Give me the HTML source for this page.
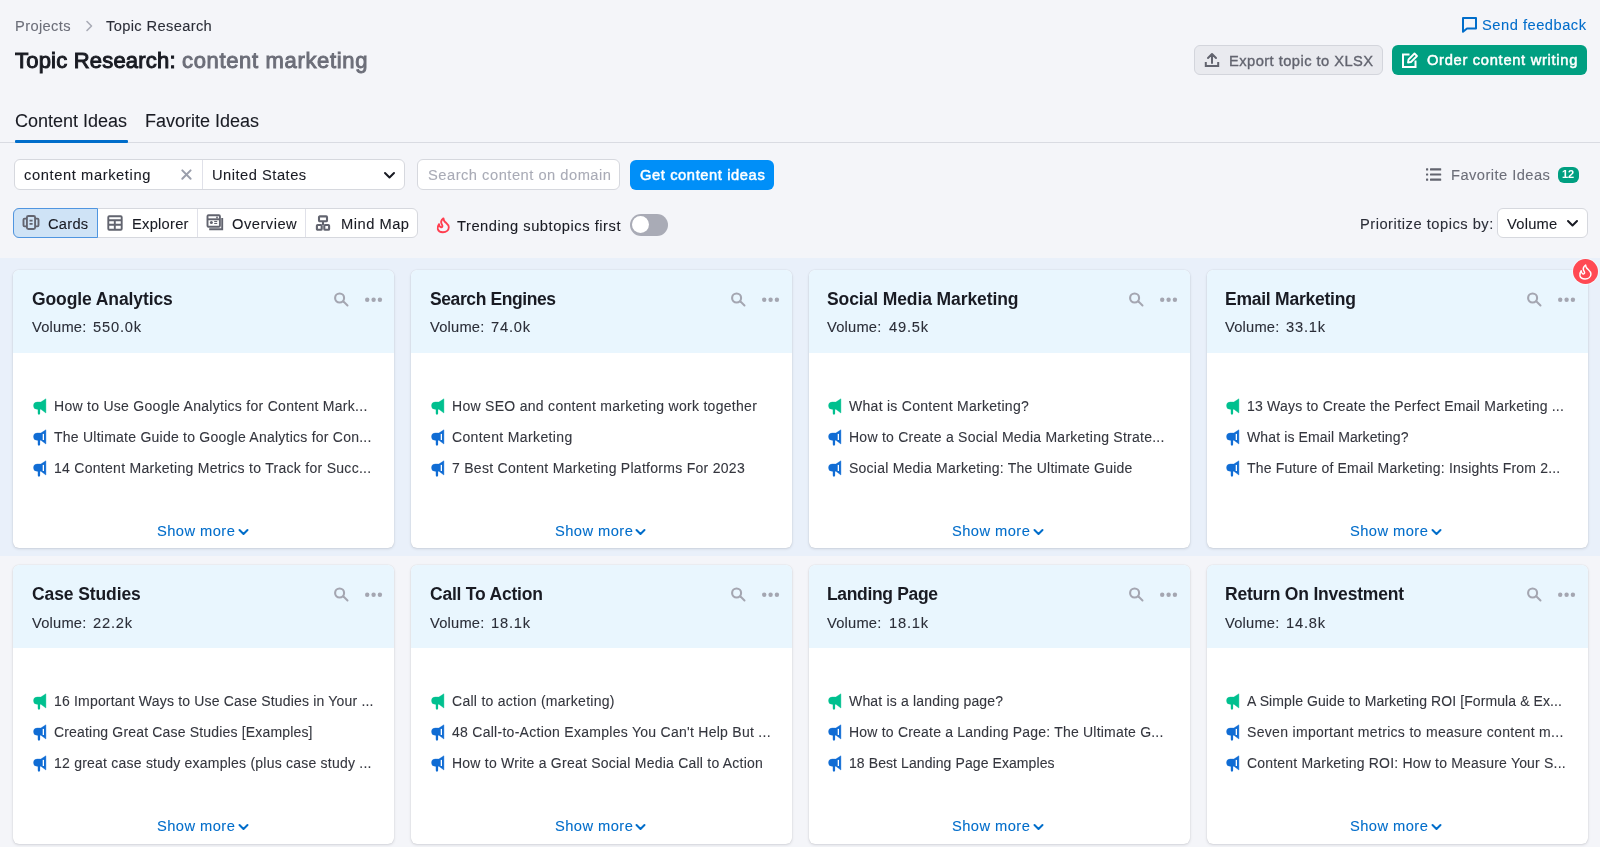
<!DOCTYPE html>
<html><head><meta charset="utf-8"><title>Topic Research</title>
<style>
html,body{margin:0;padding:0;}
body{width:1600px;height:847px;overflow:hidden;position:relative;background:#f4f5f9;font-family:"Liberation Sans",sans-serif;}
.t{position:absolute;white-space:nowrap;line-height:30px;will-change:transform;-webkit-text-stroke:0.1px currentColor;}
.r{position:absolute;}
svg.r{overflow:visible}
</style></head><body>
<div class="t" style="left:15px;top:10.600000000000001px;font-size:14.7px;color:#6c6e79;font-weight:400;letter-spacing:0.35px;">Projects</div>
<svg class="r" style="left:84px;top:19px" width="10" height="14" viewBox="0 0 10 14"><path d="M3 2.5 L7.5 7 L3 11.5" fill="none" stroke="#a9abb6" stroke-width="1.6" stroke-linecap="round" stroke-linejoin="round"/></svg>
<div class="t" style="left:105.6px;top:10.600000000000001px;font-size:14.7px;color:#2b2e38;font-weight:400;letter-spacing:0.35px;">Topic Research</div>
<div class="t" style="left:15px;top:45.5px;font-size:22px;color:#191b23;font-weight:400;letter-spacing:0.2px;-webkit-text-stroke:1px #191b23;">Topic Research:</div>
<div class="t" style="left:181.5px;top:45.5px;font-size:22px;color:#6c6e79;font-weight:400;letter-spacing:0.66px;-webkit-text-stroke:0.95px #6c6e79;">content marketing</div>
<svg class="r" style="left:1461px;top:16px" width="17" height="17" viewBox="0 0 17 17"><path d="M2 2 H15 V12.5 H6 L2 15.8 Z" fill="none" stroke="#006dca" stroke-width="2" stroke-linejoin="round"/></svg>
<div class="t" style="left:1482px;top:10.399999999999999px;font-size:14.7px;color:#006dca;font-weight:400;letter-spacing:0.5px;">Send feedback</div>
<div class="r" style="left:1194px;top:45px;width:189px;height:30px;box-sizing:border-box;border:1px solid #d3d5dc;background:#e9eaef;border-radius:6px"></div>
<svg class="r" style="left:1204px;top:52px" width="16" height="16" viewBox="0 0 16 16"><path d="M8 11 V2.5 M4 6 L8 2 L12 6" fill="none" stroke="#62646f" stroke-width="2" stroke-linecap="round" stroke-linejoin="round"/><path d="M1.8 10 V14 H14.2 V10" fill="none" stroke="#62646f" stroke-width="2"/></svg>
<div class="t" style="left:1229.4px;top:45.599999999999994px;font-size:14.7px;color:#62646f;font-weight:400;letter-spacing:0.45px;-webkit-text-stroke:0.35px #62646f;">Export topic to XLSX</div>
<div class="r" style="left:1392px;top:45px;width:195px;height:29.5px;background:#009f81;border-radius:6px"></div>
<svg class="r" style="left:1400px;top:51px" width="19" height="19" viewBox="0 0 19 19"><path d="M9.5 3.5 H3 V16 H15.5 V9.5" fill="none" stroke="#fff" stroke-width="2"/><path d="M8 11.5 L8.5 8.5 L14.5 2.5 L17 5 L11 11 Z" fill="none" stroke="#fff" stroke-width="1.8" stroke-linejoin="round"/></svg>
<div class="t" style="left:1426.9px;top:45.099999999999994px;font-size:14.7px;color:#ffffff;font-weight:400;letter-spacing:0.7px;-webkit-text-stroke:0.5px #fff;">Order content writing</div>
<div class="t" style="left:15px;top:106.2px;font-size:18px;color:#191b23;font-weight:400;letter-spacing:0px;">Content Ideas</div>
<div class="t" style="left:145.3px;top:106.2px;font-size:18px;color:#191b23;font-weight:400;letter-spacing:0px;">Favorite Ideas</div>
<div class="r" style="left:0px;top:142px;width:1600px;height:1px;background:#d9dbe2"></div>
<div class="r" style="left:14.6px;top:140px;width:113.4px;height:3px;background:#006dca;border-radius:1px"></div>
<div class="r" style="left:14px;top:159px;width:391px;height:31px;box-sizing:border-box;border:1px solid #d6d8de;background:#fff;border-radius:6px"></div>
<div class="r" style="left:202px;top:160px;width:1px;height:29px;background:#e0e1e9"></div>
<div class="t" style="left:24.4px;top:160px;font-size:14.7px;color:#191b23;font-weight:400;letter-spacing:0.6px;">content marketing</div>
<svg class="r" style="left:180px;top:169px" width="13" height="12" viewBox="0 0 13 12"><path d="M2.3 1.4 L10.6 9.8 M10.6 1.4 L2.3 9.8" stroke="#9a9eab" stroke-width="2" stroke-linecap="round"/></svg>
<div class="t" style="left:212.2px;top:160px;font-size:14.7px;color:#191b23;font-weight:400;letter-spacing:0.5px;">United States</div>
<svg class="r" style="left:383px;top:171px" width="13" height="9" viewBox="0 0 13 9"><path d="M2 2 L6.5 6.5 L11 2" fill="none" stroke="#191b23" stroke-width="2" stroke-linecap="round" stroke-linejoin="round"/></svg>
<div class="r" style="left:417px;top:159px;width:203px;height:31px;box-sizing:border-box;border:1px solid #d6d8de;background:#fff;border-radius:6px"></div>
<div class="t" style="left:427.8px;top:160px;font-size:14.7px;color:#a9abb6;font-weight:400;letter-spacing:0.5px;">Search content on domain</div>
<div class="r" style="left:630px;top:160px;width:144px;height:29.5px;background:#008ff8;border-radius:6px"></div>
<div class="t" style="left:640.4px;top:160px;font-size:14.7px;color:#ffffff;font-weight:400;letter-spacing:0.6px;-webkit-text-stroke:0.5px #fff;">Get content ideas</div>
<svg class="r" style="left:1425px;top:167px" width="17" height="15" viewBox="0 0 17 15"><g fill="#62646f"><rect x="1" y="1.2" width="2.2" height="2.2" rx="0.5"/><rect x="1" y="6.4" width="2.2" height="2.2" rx="0.5"/><rect x="1" y="11.6" width="2.2" height="2.2" rx="0.5"/><rect x="5" y="1.2" width="11.2" height="2.2" rx="0.5"/><rect x="5" y="6.4" width="11.2" height="2.2" rx="0.5"/><rect x="5" y="11.6" width="11.2" height="2.2" rx="0.5"/></g></svg>
<div class="t" style="left:1450.6px;top:160px;font-size:14.7px;color:#6c6e79;font-weight:400;letter-spacing:0.45px;">Favorite Ideas</div>
<div class="r" style="left:1557.5px;top:167px;width:21px;height:15.5px;background:#009f81;border-radius:6px"></div>
<div class="t" style="left:1561.5px;top:159px;font-size:11px;color:#fff;font-weight:700;letter-spacing:0px;-webkit-text-stroke:0;">12</div>
<div class="r" style="left:13px;top:208px;width:405px;height:30px;box-sizing:border-box;border:1px solid #d6d8de;background:#fff;border-radius:6px"></div>
<div class="r" style="left:13px;top:208px;width:85px;height:30px;box-sizing:border-box;border:1px solid #4f95e0;background:#cfe3f6;border-radius:6px 0 0 6px"></div>
<div class="r" style="left:197px;top:209px;width:1px;height:28px;background:#e0e1e9"></div>
<div class="r" style="left:305px;top:209px;width:1px;height:28px;background:#e0e1e9"></div>
<svg class="r" style="left:21px;top:214px" width="19" height="17" viewBox="0 0 19 17"><g fill="none" stroke="#62646f" stroke-width="1.9"><rect x="5.9" y="2" width="8.2" height="13" rx="1.5"/><path d="M5.9 4.6 H3.6 Q2.5 4.6 2.5 5.7 V11.3 Q2.5 12.4 3.6 12.4 H5.9 M14.1 4.6 H16.4 Q17.5 4.6 17.5 5.7 V11.3 Q17.5 12.4 16.4 12.4 H14.1"/></g><path d="M8.5 6.6 H11.6 M8.5 9.9 H11.6" stroke="#62646f" stroke-width="1.9"/></svg>
<div class="t" style="left:48.4px;top:208.8px;font-size:14.7px;color:#191b23;font-weight:400;letter-spacing:0.25px;">Cards</div>
<svg class="r" style="left:106px;top:214px" width="17" height="17" viewBox="0 0 17 17"><g fill="none" stroke="#62646f" stroke-width="1.9"><rect x="2.3" y="2.3" width="13.4" height="13.4" rx="1"/><path d="M2.3 6.2 H15.7 M2.3 10.8 H15.7 M8.8 6.2 V15.7"/></g></svg>
<div class="t" style="left:132.3px;top:208.8px;font-size:14.7px;color:#191b23;font-weight:400;letter-spacing:0.25px;">Explorer</div>
<svg class="r" style="left:205px;top:213px" width="19" height="18" viewBox="0 0 19 18"><g fill="none" stroke="#62646f" stroke-width="1.9"><rect x="2.5" y="2.3" width="12.4" height="11.4" rx="1"/><path d="M17.2 5 V16.3 H4.2"/><path d="M2.5 6.3 H14.9"/></g><g fill="#62646f"><rect x="11.2" y="3.6" width="1.6" height="1.8"/><circle cx="6.4" cy="9.4" r="1.5"/><rect x="9.2" y="7.9" width="3" height="1.1"/><rect x="9.2" y="9.9" width="3" height="1.1"/></g></svg>
<div class="t" style="left:232.1px;top:208.8px;font-size:14.7px;color:#191b23;font-weight:400;letter-spacing:0.5px;">Overview</div>
<svg class="r" style="left:314px;top:214px" width="18" height="17" viewBox="0 0 18 17"><g fill="none" stroke="#62646f" stroke-width="2.1"><rect x="5" y="2.4" width="8" height="4.8" rx="0.8"/><rect x="2.9" y="11" width="4.8" height="4.8" rx="0.8"/><rect x="10.3" y="11" width="4.8" height="4.8" rx="0.8"/><path d="M9 7.2 V11"/></g></svg>
<div class="t" style="left:340.5px;top:208.8px;font-size:14.7px;color:#191b23;font-weight:400;letter-spacing:0.5px;">Mind Map</div>
<svg class="r" style="left:430px;top:212px" width="26" height="26" viewBox="0 0 26 26"><g transform="translate(13.3 13.3) scale(0.87) translate(-13.3 -13.3)"><path d="M13.5 5.3 C10.6 7.6 10.2 10.3 11.8 12.6 C12.9 14.2 12.2 15.9 10.4 15.5 C9.3 15.2 8.6 13.9 8.4 11.9 C7.1 13.7 6.6 15.8 7 17.6 C7.6 20 9.8 21.3 12.9 21.3 C16.8 21.3 19.6 18.8 19.6 15.6 C19.6 12.2 16.3 10.7 14.7 8.7 C14 7.8 13.6 6.6 13.5 5.3 Z" fill="none" stroke="#ff3d4f" stroke-width="2.15" stroke-linejoin="round"/></g></svg>
<div class="t" style="left:456.7px;top:210.8px;font-size:14.7px;color:#191b23;font-weight:400;letter-spacing:0.53px;">Trending subtopics first</div>
<div class="r" style="left:630px;top:214px;width:37.5px;height:21.5px;background:#a9abb6;border-radius:11px"></div>
<div class="r" style="left:632px;top:216.2px;width:17px;height:17px;background:#fff;border-radius:50%"></div>
<div class="t" style="left:1359.6px;top:208.5px;font-size:14.7px;color:#2b2e38;font-weight:400;letter-spacing:0.5px;">Prioritize topics by:</div>
<div class="r" style="left:1497px;top:208px;width:91px;height:30px;box-sizing:border-box;border:1px solid #d6d8de;background:#fff;border-radius:6px"></div>
<div class="t" style="left:1506.9px;top:208.5px;font-size:14.7px;color:#191b23;font-weight:400;letter-spacing:0.25px;">Volume</div>
<svg class="r" style="left:1566px;top:219px" width="13" height="9" viewBox="0 0 13 9"><path d="M2 2 L6.5 6.5 L11 2" fill="none" stroke="#191b23" stroke-width="2" stroke-linecap="round" stroke-linejoin="round"/></svg>
<div class="r" style="left:0px;top:258px;width:1600px;height:298px;background:#e9f0fa"></div>
<div class="r" style="left:12.5px;top:270px;width:381.8px;height:278px;background:#fff;border-radius:6px;box-shadow:0 0 1px rgba(25,27,35,0.2),0 1px 3px rgba(25,27,35,0.13);overflow:hidden"></div>
<div class="r" style="left:12.5px;top:270px;width:381.8px;height:83px;background:#e9f6fe;border-radius:6px 6px 0 0"></div>
<div class="t" style="left:31.9px;top:284px;font-size:17.5px;color:#191b23;font-weight:700;letter-spacing:-0.1px;-webkit-text-stroke:0;">Google Analytics</div>
<div class="t" style="left:32.0px;top:312px;font-size:14.7px;color:#2b2e38;font-weight:400;letter-spacing:0.2px;">Volume:</div>
<div class="t" style="left:93.3px;top:312px;font-size:14.7px;color:#2b2e38;font-weight:400;letter-spacing:0.8px;">550.0k</div>
<svg class="r" style="left:330.5px;top:289px" width="20" height="20" viewBox="0 0 20 20"><circle cx="8.6" cy="9" r="4.5" fill="none" stroke="#a4a6b1" stroke-width="2.1"/><path d="M12.5 12.5 L16.5 16.5" stroke="#a4a6b1" stroke-width="2" stroke-linecap="round"/></svg>
<svg class="r" style="left:360.5px;top:294px" width="24" height="12" viewBox="0 0 24 12"><g fill="#a4a6b1"><circle cx="6.2" cy="5.7" r="2.2"/><circle cx="12.6" cy="5.7" r="2.2"/><circle cx="18.9" cy="5.7" r="2.2"/></g></svg>
<svg class="r" style="left:30.0px;top:396px" width="20" height="22" viewBox="0 0 20 22"><g fill="#00c08f"><path d="M7.1 6.1 H10.9 L15.9 2.8 V17 L10.9 13.2 H7.1 A3.55 3.55 0 0 1 7.1 6.1 Z" stroke="#00c08f" stroke-width="0.4" stroke-linejoin="round"/><rect x="7.8" y="12" width="2.3" height="6.7" rx="1.15"/></g></svg>
<div class="t" style="left:53.9px;top:391.2px;font-size:14px;color:#34363e;font-weight:400;letter-spacing:0.282px;">How to Use Google Analytics for Content Mark...</div>
<svg class="r" style="left:30.0px;top:427px" width="20" height="22" viewBox="0 0 20 22"><g fill="#106cd4"><path d="M7.1 6.1 H10.9 L15.9 2.8 V17 L10.9 13.2 H7.1 A3.55 3.55 0 0 1 7.1 6.1 Z" stroke="#106cd4" stroke-width="0.4" stroke-linejoin="round"/><rect x="7.8" y="12" width="2.3" height="6.7" rx="1.15"/></g><rect x="12.7" y="6.9" width="1.3" height="6.1" fill="#fff"/></svg>
<div class="t" style="left:53.9px;top:422px;font-size:14px;color:#34363e;font-weight:400;letter-spacing:0.241px;">The Ultimate Guide to Google Analytics for Con...</div>
<svg class="r" style="left:30.0px;top:457.5px" width="20" height="22" viewBox="0 0 20 22"><g fill="#106cd4"><path d="M7.1 6.1 H10.9 L15.9 2.8 V17 L10.9 13.2 H7.1 A3.55 3.55 0 0 1 7.1 6.1 Z" stroke="#106cd4" stroke-width="0.4" stroke-linejoin="round"/><rect x="7.8" y="12" width="2.3" height="6.7" rx="1.15"/></g><rect x="12.7" y="6.9" width="1.3" height="6.1" fill="#fff"/></svg>
<div class="t" style="left:53.9px;top:452.5px;font-size:14px;color:#34363e;font-weight:400;letter-spacing:0.286px;">14 Content Marketing Metrics to Track for Succ...</div>
<div class="t" style="left:156.9px;top:516px;font-size:14.7px;color:#006dca;font-weight:400;letter-spacing:0.45px;">Show more</div>
<svg class="r" style="left:236.5px;top:527.3px" width="14" height="10" viewBox="0 0 14 10"><path d="M2.5 3 L6.5 7 L10.5 3" fill="none" stroke="#006dca" stroke-width="2" stroke-linecap="round" stroke-linejoin="round"/></svg>
<div class="r" style="left:410.5px;top:270px;width:381.8px;height:278px;background:#fff;border-radius:6px;box-shadow:0 0 1px rgba(25,27,35,0.2),0 1px 3px rgba(25,27,35,0.13);overflow:hidden"></div>
<div class="r" style="left:410.5px;top:270px;width:381.8px;height:83px;background:#e9f6fe;border-radius:6px 6px 0 0"></div>
<div class="t" style="left:429.59999999999997px;top:284px;font-size:17.5px;color:#191b23;font-weight:700;letter-spacing:-0.4px;-webkit-text-stroke:0;">Search Engines</div>
<div class="t" style="left:429.7px;top:312px;font-size:14.7px;color:#2b2e38;font-weight:400;letter-spacing:0.2px;">Volume:</div>
<div class="t" style="left:491.0px;top:312px;font-size:14.7px;color:#2b2e38;font-weight:400;letter-spacing:0.8px;">74.0k</div>
<svg class="r" style="left:728.2px;top:289px" width="20" height="20" viewBox="0 0 20 20"><circle cx="8.6" cy="9" r="4.5" fill="none" stroke="#a4a6b1" stroke-width="2.1"/><path d="M12.5 12.5 L16.5 16.5" stroke="#a4a6b1" stroke-width="2" stroke-linecap="round"/></svg>
<svg class="r" style="left:758.2px;top:294px" width="24" height="12" viewBox="0 0 24 12"><g fill="#a4a6b1"><circle cx="6.2" cy="5.7" r="2.2"/><circle cx="12.6" cy="5.7" r="2.2"/><circle cx="18.9" cy="5.7" r="2.2"/></g></svg>
<svg class="r" style="left:427.7px;top:396px" width="20" height="22" viewBox="0 0 20 22"><g fill="#00c08f"><path d="M7.1 6.1 H10.9 L15.9 2.8 V17 L10.9 13.2 H7.1 A3.55 3.55 0 0 1 7.1 6.1 Z" stroke="#00c08f" stroke-width="0.4" stroke-linejoin="round"/><rect x="7.8" y="12" width="2.3" height="6.7" rx="1.15"/></g></svg>
<div class="t" style="left:451.59999999999997px;top:391.2px;font-size:14px;color:#34363e;font-weight:400;letter-spacing:0.292px;">How SEO and content marketing work together</div>
<svg class="r" style="left:427.7px;top:427px" width="20" height="22" viewBox="0 0 20 22"><g fill="#106cd4"><path d="M7.1 6.1 H10.9 L15.9 2.8 V17 L10.9 13.2 H7.1 A3.55 3.55 0 0 1 7.1 6.1 Z" stroke="#106cd4" stroke-width="0.4" stroke-linejoin="round"/><rect x="7.8" y="12" width="2.3" height="6.7" rx="1.15"/></g><rect x="12.7" y="6.9" width="1.3" height="6.1" fill="#fff"/></svg>
<div class="t" style="left:451.59999999999997px;top:422px;font-size:14px;color:#34363e;font-weight:400;letter-spacing:0.363px;">Content Marketing</div>
<svg class="r" style="left:427.7px;top:457.5px" width="20" height="22" viewBox="0 0 20 22"><g fill="#106cd4"><path d="M7.1 6.1 H10.9 L15.9 2.8 V17 L10.9 13.2 H7.1 A3.55 3.55 0 0 1 7.1 6.1 Z" stroke="#106cd4" stroke-width="0.4" stroke-linejoin="round"/><rect x="7.8" y="12" width="2.3" height="6.7" rx="1.15"/></g><rect x="12.7" y="6.9" width="1.3" height="6.1" fill="#fff"/></svg>
<div class="t" style="left:451.59999999999997px;top:452.5px;font-size:14px;color:#34363e;font-weight:400;letter-spacing:0.28px;">7 Best Content Marketing Platforms For 2023</div>
<div class="t" style="left:554.6px;top:516px;font-size:14.7px;color:#006dca;font-weight:400;letter-spacing:0.45px;">Show more</div>
<svg class="r" style="left:634.2px;top:527.3px" width="14" height="10" viewBox="0 0 14 10"><path d="M2.5 3 L6.5 7 L10.5 3" fill="none" stroke="#006dca" stroke-width="2" stroke-linecap="round" stroke-linejoin="round"/></svg>
<div class="r" style="left:808.5px;top:270px;width:381.8px;height:278px;background:#fff;border-radius:6px;box-shadow:0 0 1px rgba(25,27,35,0.2),0 1px 3px rgba(25,27,35,0.13);overflow:hidden"></div>
<div class="r" style="left:808.5px;top:270px;width:381.8px;height:83px;background:#e9f6fe;border-radius:6px 6px 0 0"></div>
<div class="t" style="left:827.3px;top:284px;font-size:17.5px;color:#191b23;font-weight:700;letter-spacing:-0.1px;-webkit-text-stroke:0;">Social Media Marketing</div>
<div class="t" style="left:827.4px;top:312px;font-size:14.7px;color:#2b2e38;font-weight:400;letter-spacing:0.2px;">Volume:</div>
<div class="t" style="left:888.6999999999999px;top:312px;font-size:14.7px;color:#2b2e38;font-weight:400;letter-spacing:0.8px;">49.5k</div>
<svg class="r" style="left:1125.9px;top:289px" width="20" height="20" viewBox="0 0 20 20"><circle cx="8.6" cy="9" r="4.5" fill="none" stroke="#a4a6b1" stroke-width="2.1"/><path d="M12.5 12.5 L16.5 16.5" stroke="#a4a6b1" stroke-width="2" stroke-linecap="round"/></svg>
<svg class="r" style="left:1155.9px;top:294px" width="24" height="12" viewBox="0 0 24 12"><g fill="#a4a6b1"><circle cx="6.2" cy="5.7" r="2.2"/><circle cx="12.6" cy="5.7" r="2.2"/><circle cx="18.9" cy="5.7" r="2.2"/></g></svg>
<svg class="r" style="left:825.4px;top:396px" width="20" height="22" viewBox="0 0 20 22"><g fill="#00c08f"><path d="M7.1 6.1 H10.9 L15.9 2.8 V17 L10.9 13.2 H7.1 A3.55 3.55 0 0 1 7.1 6.1 Z" stroke="#00c08f" stroke-width="0.4" stroke-linejoin="round"/><rect x="7.8" y="12" width="2.3" height="6.7" rx="1.15"/></g></svg>
<div class="t" style="left:849.3px;top:391.2px;font-size:14px;color:#34363e;font-weight:400;letter-spacing:0.282px;">What is Content Marketing?</div>
<svg class="r" style="left:825.4px;top:427px" width="20" height="22" viewBox="0 0 20 22"><g fill="#106cd4"><path d="M7.1 6.1 H10.9 L15.9 2.8 V17 L10.9 13.2 H7.1 A3.55 3.55 0 0 1 7.1 6.1 Z" stroke="#106cd4" stroke-width="0.4" stroke-linejoin="round"/><rect x="7.8" y="12" width="2.3" height="6.7" rx="1.15"/></g><rect x="12.7" y="6.9" width="1.3" height="6.1" fill="#fff"/></svg>
<div class="t" style="left:849.3px;top:422px;font-size:14px;color:#34363e;font-weight:400;letter-spacing:0.254px;">How to Create a Social Media Marketing Strate...</div>
<svg class="r" style="left:825.4px;top:457.5px" width="20" height="22" viewBox="0 0 20 22"><g fill="#106cd4"><path d="M7.1 6.1 H10.9 L15.9 2.8 V17 L10.9 13.2 H7.1 A3.55 3.55 0 0 1 7.1 6.1 Z" stroke="#106cd4" stroke-width="0.4" stroke-linejoin="round"/><rect x="7.8" y="12" width="2.3" height="6.7" rx="1.15"/></g><rect x="12.7" y="6.9" width="1.3" height="6.1" fill="#fff"/></svg>
<div class="t" style="left:849.3px;top:452.5px;font-size:14px;color:#34363e;font-weight:400;letter-spacing:0.237px;">Social Media Marketing: The Ultimate Guide</div>
<div class="t" style="left:952.3px;top:516px;font-size:14.7px;color:#006dca;font-weight:400;letter-spacing:0.45px;">Show more</div>
<svg class="r" style="left:1031.9px;top:527.3px" width="14" height="10" viewBox="0 0 14 10"><path d="M2.5 3 L6.5 7 L10.5 3" fill="none" stroke="#006dca" stroke-width="2" stroke-linecap="round" stroke-linejoin="round"/></svg>
<div class="r" style="left:1206.5px;top:270px;width:381.8px;height:278px;background:#fff;border-radius:6px;box-shadow:0 0 1px rgba(25,27,35,0.2),0 1px 3px rgba(25,27,35,0.13);overflow:hidden"></div>
<div class="r" style="left:1206.5px;top:270px;width:381.8px;height:83px;background:#e9f6fe;border-radius:6px 6px 0 0"></div>
<div class="t" style="left:1225.0px;top:284px;font-size:17.5px;color:#191b23;font-weight:700;letter-spacing:-0.24px;-webkit-text-stroke:0;">Email Marketing</div>
<div class="t" style="left:1225.1px;top:312px;font-size:14.7px;color:#2b2e38;font-weight:400;letter-spacing:0.2px;">Volume:</div>
<div class="t" style="left:1286.3999999999999px;top:312px;font-size:14.7px;color:#2b2e38;font-weight:400;letter-spacing:0.8px;">33.1k</div>
<svg class="r" style="left:1523.6px;top:289px" width="20" height="20" viewBox="0 0 20 20"><circle cx="8.6" cy="9" r="4.5" fill="none" stroke="#a4a6b1" stroke-width="2.1"/><path d="M12.5 12.5 L16.5 16.5" stroke="#a4a6b1" stroke-width="2" stroke-linecap="round"/></svg>
<svg class="r" style="left:1553.6px;top:294px" width="24" height="12" viewBox="0 0 24 12"><g fill="#a4a6b1"><circle cx="6.2" cy="5.7" r="2.2"/><circle cx="12.6" cy="5.7" r="2.2"/><circle cx="18.9" cy="5.7" r="2.2"/></g></svg>
<svg class="r" style="left:1223.1px;top:396px" width="20" height="22" viewBox="0 0 20 22"><g fill="#00c08f"><path d="M7.1 6.1 H10.9 L15.9 2.8 V17 L10.9 13.2 H7.1 A3.55 3.55 0 0 1 7.1 6.1 Z" stroke="#00c08f" stroke-width="0.4" stroke-linejoin="round"/><rect x="7.8" y="12" width="2.3" height="6.7" rx="1.15"/></g></svg>
<div class="t" style="left:1247.0px;top:391.2px;font-size:14px;color:#34363e;font-weight:400;letter-spacing:0.208px;">13 Ways to Create the Perfect Email Marketing ...</div>
<svg class="r" style="left:1223.1px;top:427px" width="20" height="22" viewBox="0 0 20 22"><g fill="#106cd4"><path d="M7.1 6.1 H10.9 L15.9 2.8 V17 L10.9 13.2 H7.1 A3.55 3.55 0 0 1 7.1 6.1 Z" stroke="#106cd4" stroke-width="0.4" stroke-linejoin="round"/><rect x="7.8" y="12" width="2.3" height="6.7" rx="1.15"/></g><rect x="12.7" y="6.9" width="1.3" height="6.1" fill="#fff"/></svg>
<div class="t" style="left:1247.0px;top:422px;font-size:14px;color:#34363e;font-weight:400;letter-spacing:0.119px;">What is Email Marketing?</div>
<svg class="r" style="left:1223.1px;top:457.5px" width="20" height="22" viewBox="0 0 20 22"><g fill="#106cd4"><path d="M7.1 6.1 H10.9 L15.9 2.8 V17 L10.9 13.2 H7.1 A3.55 3.55 0 0 1 7.1 6.1 Z" stroke="#106cd4" stroke-width="0.4" stroke-linejoin="round"/><rect x="7.8" y="12" width="2.3" height="6.7" rx="1.15"/></g><rect x="12.7" y="6.9" width="1.3" height="6.1" fill="#fff"/></svg>
<div class="t" style="left:1247.0px;top:452.5px;font-size:14px;color:#34363e;font-weight:400;letter-spacing:0.188px;">The Future of Email Marketing: Insights From 2...</div>
<div class="t" style="left:1350.0px;top:516px;font-size:14.7px;color:#006dca;font-weight:400;letter-spacing:0.45px;">Show more</div>
<svg class="r" style="left:1429.6px;top:527.3px" width="14" height="10" viewBox="0 0 14 10"><path d="M2.5 3 L6.5 7 L10.5 3" fill="none" stroke="#006dca" stroke-width="2" stroke-linecap="round" stroke-linejoin="round"/></svg>
<div class="r" style="left:12.5px;top:565px;width:381.8px;height:279px;background:#fff;border-radius:6px;box-shadow:0 0 1px rgba(25,27,35,0.2),0 1px 3px rgba(25,27,35,0.13);overflow:hidden"></div>
<div class="r" style="left:12.5px;top:565px;width:381.8px;height:83px;background:#e9f6fe;border-radius:6px 6px 0 0"></div>
<div class="t" style="left:31.9px;top:579px;font-size:17.5px;color:#191b23;font-weight:700;letter-spacing:-0.1px;-webkit-text-stroke:0;">Case Studies</div>
<div class="t" style="left:32.0px;top:607.5px;font-size:14.7px;color:#2b2e38;font-weight:400;letter-spacing:0.2px;">Volume:</div>
<div class="t" style="left:93.3px;top:607.5px;font-size:14.7px;color:#2b2e38;font-weight:400;letter-spacing:0.8px;">22.2k</div>
<svg class="r" style="left:330.5px;top:584px" width="20" height="20" viewBox="0 0 20 20"><circle cx="8.6" cy="9" r="4.5" fill="none" stroke="#a4a6b1" stroke-width="2.1"/><path d="M12.5 12.5 L16.5 16.5" stroke="#a4a6b1" stroke-width="2" stroke-linecap="round"/></svg>
<svg class="r" style="left:360.5px;top:589px" width="24" height="12" viewBox="0 0 24 12"><g fill="#a4a6b1"><circle cx="6.2" cy="5.7" r="2.2"/><circle cx="12.6" cy="5.7" r="2.2"/><circle cx="18.9" cy="5.7" r="2.2"/></g></svg>
<svg class="r" style="left:30.0px;top:691px" width="20" height="22" viewBox="0 0 20 22"><g fill="#00c08f"><path d="M7.1 6.1 H10.9 L15.9 2.8 V17 L10.9 13.2 H7.1 A3.55 3.55 0 0 1 7.1 6.1 Z" stroke="#00c08f" stroke-width="0.4" stroke-linejoin="round"/><rect x="7.8" y="12" width="2.3" height="6.7" rx="1.15"/></g></svg>
<div class="t" style="left:53.9px;top:686.2px;font-size:14px;color:#34363e;font-weight:400;letter-spacing:0.182px;">16 Important Ways to Use Case Studies in Your ...</div>
<svg class="r" style="left:30.0px;top:722px" width="20" height="22" viewBox="0 0 20 22"><g fill="#106cd4"><path d="M7.1 6.1 H10.9 L15.9 2.8 V17 L10.9 13.2 H7.1 A3.55 3.55 0 0 1 7.1 6.1 Z" stroke="#106cd4" stroke-width="0.4" stroke-linejoin="round"/><rect x="7.8" y="12" width="2.3" height="6.7" rx="1.15"/></g><rect x="12.7" y="6.9" width="1.3" height="6.1" fill="#fff"/></svg>
<div class="t" style="left:53.9px;top:717px;font-size:14px;color:#34363e;font-weight:400;letter-spacing:0.172px;">Creating Great Case Studies [Examples]</div>
<svg class="r" style="left:30.0px;top:752.5px" width="20" height="22" viewBox="0 0 20 22"><g fill="#106cd4"><path d="M7.1 6.1 H10.9 L15.9 2.8 V17 L10.9 13.2 H7.1 A3.55 3.55 0 0 1 7.1 6.1 Z" stroke="#106cd4" stroke-width="0.4" stroke-linejoin="round"/><rect x="7.8" y="12" width="2.3" height="6.7" rx="1.15"/></g><rect x="12.7" y="6.9" width="1.3" height="6.1" fill="#fff"/></svg>
<div class="t" style="left:53.9px;top:747.5px;font-size:14px;color:#34363e;font-weight:400;letter-spacing:0.226px;">12 great case study examples (plus case study ...</div>
<div class="t" style="left:156.9px;top:811px;font-size:14.7px;color:#006dca;font-weight:400;letter-spacing:0.45px;">Show more</div>
<svg class="r" style="left:236.5px;top:822.3px" width="14" height="10" viewBox="0 0 14 10"><path d="M2.5 3 L6.5 7 L10.5 3" fill="none" stroke="#006dca" stroke-width="2" stroke-linecap="round" stroke-linejoin="round"/></svg>
<div class="r" style="left:410.5px;top:565px;width:381.8px;height:279px;background:#fff;border-radius:6px;box-shadow:0 0 1px rgba(25,27,35,0.2),0 1px 3px rgba(25,27,35,0.13);overflow:hidden"></div>
<div class="r" style="left:410.5px;top:565px;width:381.8px;height:83px;background:#e9f6fe;border-radius:6px 6px 0 0"></div>
<div class="t" style="left:429.59999999999997px;top:579px;font-size:17.5px;color:#191b23;font-weight:700;letter-spacing:-0.22px;-webkit-text-stroke:0;">Call To Action</div>
<div class="t" style="left:429.7px;top:607.5px;font-size:14.7px;color:#2b2e38;font-weight:400;letter-spacing:0.2px;">Volume:</div>
<div class="t" style="left:491.0px;top:607.5px;font-size:14.7px;color:#2b2e38;font-weight:400;letter-spacing:0.8px;">18.1k</div>
<svg class="r" style="left:728.2px;top:584px" width="20" height="20" viewBox="0 0 20 20"><circle cx="8.6" cy="9" r="4.5" fill="none" stroke="#a4a6b1" stroke-width="2.1"/><path d="M12.5 12.5 L16.5 16.5" stroke="#a4a6b1" stroke-width="2" stroke-linecap="round"/></svg>
<svg class="r" style="left:758.2px;top:589px" width="24" height="12" viewBox="0 0 24 12"><g fill="#a4a6b1"><circle cx="6.2" cy="5.7" r="2.2"/><circle cx="12.6" cy="5.7" r="2.2"/><circle cx="18.9" cy="5.7" r="2.2"/></g></svg>
<svg class="r" style="left:427.7px;top:691px" width="20" height="22" viewBox="0 0 20 22"><g fill="#00c08f"><path d="M7.1 6.1 H10.9 L15.9 2.8 V17 L10.9 13.2 H7.1 A3.55 3.55 0 0 1 7.1 6.1 Z" stroke="#00c08f" stroke-width="0.4" stroke-linejoin="round"/><rect x="7.8" y="12" width="2.3" height="6.7" rx="1.15"/></g></svg>
<div class="t" style="left:451.59999999999997px;top:686.2px;font-size:14px;color:#34363e;font-weight:400;letter-spacing:0.274px;">Call to action (marketing)</div>
<svg class="r" style="left:427.7px;top:722px" width="20" height="22" viewBox="0 0 20 22"><g fill="#106cd4"><path d="M7.1 6.1 H10.9 L15.9 2.8 V17 L10.9 13.2 H7.1 A3.55 3.55 0 0 1 7.1 6.1 Z" stroke="#106cd4" stroke-width="0.4" stroke-linejoin="round"/><rect x="7.8" y="12" width="2.3" height="6.7" rx="1.15"/></g><rect x="12.7" y="6.9" width="1.3" height="6.1" fill="#fff"/></svg>
<div class="t" style="left:451.59999999999997px;top:717px;font-size:14px;color:#34363e;font-weight:400;letter-spacing:0.274px;">48 Call-to-Action Examples You Can't Help But ...</div>
<svg class="r" style="left:427.7px;top:752.5px" width="20" height="22" viewBox="0 0 20 22"><g fill="#106cd4"><path d="M7.1 6.1 H10.9 L15.9 2.8 V17 L10.9 13.2 H7.1 A3.55 3.55 0 0 1 7.1 6.1 Z" stroke="#106cd4" stroke-width="0.4" stroke-linejoin="round"/><rect x="7.8" y="12" width="2.3" height="6.7" rx="1.15"/></g><rect x="12.7" y="6.9" width="1.3" height="6.1" fill="#fff"/></svg>
<div class="t" style="left:451.59999999999997px;top:747.5px;font-size:14px;color:#34363e;font-weight:400;letter-spacing:0.229px;">How to Write a Great Social Media Call to Action</div>
<div class="t" style="left:554.6px;top:811px;font-size:14.7px;color:#006dca;font-weight:400;letter-spacing:0.45px;">Show more</div>
<svg class="r" style="left:634.2px;top:822.3px" width="14" height="10" viewBox="0 0 14 10"><path d="M2.5 3 L6.5 7 L10.5 3" fill="none" stroke="#006dca" stroke-width="2" stroke-linecap="round" stroke-linejoin="round"/></svg>
<div class="r" style="left:808.5px;top:565px;width:381.8px;height:279px;background:#fff;border-radius:6px;box-shadow:0 0 1px rgba(25,27,35,0.2),0 1px 3px rgba(25,27,35,0.13);overflow:hidden"></div>
<div class="r" style="left:808.5px;top:565px;width:381.8px;height:83px;background:#e9f6fe;border-radius:6px 6px 0 0"></div>
<div class="t" style="left:827.3px;top:579px;font-size:17.5px;color:#191b23;font-weight:700;letter-spacing:-0.33px;-webkit-text-stroke:0;">Landing Page</div>
<div class="t" style="left:827.4px;top:607.5px;font-size:14.7px;color:#2b2e38;font-weight:400;letter-spacing:0.2px;">Volume:</div>
<div class="t" style="left:888.6999999999999px;top:607.5px;font-size:14.7px;color:#2b2e38;font-weight:400;letter-spacing:0.8px;">18.1k</div>
<svg class="r" style="left:1125.9px;top:584px" width="20" height="20" viewBox="0 0 20 20"><circle cx="8.6" cy="9" r="4.5" fill="none" stroke="#a4a6b1" stroke-width="2.1"/><path d="M12.5 12.5 L16.5 16.5" stroke="#a4a6b1" stroke-width="2" stroke-linecap="round"/></svg>
<svg class="r" style="left:1155.9px;top:589px" width="24" height="12" viewBox="0 0 24 12"><g fill="#a4a6b1"><circle cx="6.2" cy="5.7" r="2.2"/><circle cx="12.6" cy="5.7" r="2.2"/><circle cx="18.9" cy="5.7" r="2.2"/></g></svg>
<svg class="r" style="left:825.4px;top:691px" width="20" height="22" viewBox="0 0 20 22"><g fill="#00c08f"><path d="M7.1 6.1 H10.9 L15.9 2.8 V17 L10.9 13.2 H7.1 A3.55 3.55 0 0 1 7.1 6.1 Z" stroke="#00c08f" stroke-width="0.4" stroke-linejoin="round"/><rect x="7.8" y="12" width="2.3" height="6.7" rx="1.15"/></g></svg>
<div class="t" style="left:849.3px;top:686.2px;font-size:14px;color:#34363e;font-weight:400;letter-spacing:0.176px;">What is a landing page?</div>
<svg class="r" style="left:825.4px;top:722px" width="20" height="22" viewBox="0 0 20 22"><g fill="#106cd4"><path d="M7.1 6.1 H10.9 L15.9 2.8 V17 L10.9 13.2 H7.1 A3.55 3.55 0 0 1 7.1 6.1 Z" stroke="#106cd4" stroke-width="0.4" stroke-linejoin="round"/><rect x="7.8" y="12" width="2.3" height="6.7" rx="1.15"/></g><rect x="12.7" y="6.9" width="1.3" height="6.1" fill="#fff"/></svg>
<div class="t" style="left:849.3px;top:717px;font-size:14px;color:#34363e;font-weight:400;letter-spacing:0.207px;">How to Create a Landing Page: The Ultimate G...</div>
<svg class="r" style="left:825.4px;top:752.5px" width="20" height="22" viewBox="0 0 20 22"><g fill="#106cd4"><path d="M7.1 6.1 H10.9 L15.9 2.8 V17 L10.9 13.2 H7.1 A3.55 3.55 0 0 1 7.1 6.1 Z" stroke="#106cd4" stroke-width="0.4" stroke-linejoin="round"/><rect x="7.8" y="12" width="2.3" height="6.7" rx="1.15"/></g><rect x="12.7" y="6.9" width="1.3" height="6.1" fill="#fff"/></svg>
<div class="t" style="left:849.3px;top:747.5px;font-size:14px;color:#34363e;font-weight:400;letter-spacing:0.086px;">18 Best Landing Page Examples</div>
<div class="t" style="left:952.3px;top:811px;font-size:14.7px;color:#006dca;font-weight:400;letter-spacing:0.45px;">Show more</div>
<svg class="r" style="left:1031.9px;top:822.3px" width="14" height="10" viewBox="0 0 14 10"><path d="M2.5 3 L6.5 7 L10.5 3" fill="none" stroke="#006dca" stroke-width="2" stroke-linecap="round" stroke-linejoin="round"/></svg>
<div class="r" style="left:1206.5px;top:565px;width:381.8px;height:279px;background:#fff;border-radius:6px;box-shadow:0 0 1px rgba(25,27,35,0.2),0 1px 3px rgba(25,27,35,0.13);overflow:hidden"></div>
<div class="r" style="left:1206.5px;top:565px;width:381.8px;height:83px;background:#e9f6fe;border-radius:6px 6px 0 0"></div>
<div class="t" style="left:1225.0px;top:579px;font-size:17.5px;color:#191b23;font-weight:700;letter-spacing:-0.2px;-webkit-text-stroke:0;">Return On Investment</div>
<div class="t" style="left:1225.1px;top:607.5px;font-size:14.7px;color:#2b2e38;font-weight:400;letter-spacing:0.2px;">Volume:</div>
<div class="t" style="left:1286.3999999999999px;top:607.5px;font-size:14.7px;color:#2b2e38;font-weight:400;letter-spacing:0.8px;">14.8k</div>
<svg class="r" style="left:1523.6px;top:584px" width="20" height="20" viewBox="0 0 20 20"><circle cx="8.6" cy="9" r="4.5" fill="none" stroke="#a4a6b1" stroke-width="2.1"/><path d="M12.5 12.5 L16.5 16.5" stroke="#a4a6b1" stroke-width="2" stroke-linecap="round"/></svg>
<svg class="r" style="left:1553.6px;top:589px" width="24" height="12" viewBox="0 0 24 12"><g fill="#a4a6b1"><circle cx="6.2" cy="5.7" r="2.2"/><circle cx="12.6" cy="5.7" r="2.2"/><circle cx="18.9" cy="5.7" r="2.2"/></g></svg>
<svg class="r" style="left:1223.1px;top:691px" width="20" height="22" viewBox="0 0 20 22"><g fill="#00c08f"><path d="M7.1 6.1 H10.9 L15.9 2.8 V17 L10.9 13.2 H7.1 A3.55 3.55 0 0 1 7.1 6.1 Z" stroke="#00c08f" stroke-width="0.4" stroke-linejoin="round"/><rect x="7.8" y="12" width="2.3" height="6.7" rx="1.15"/></g></svg>
<div class="t" style="left:1247.0px;top:686.2px;font-size:14px;color:#34363e;font-weight:400;letter-spacing:0.096px;">A Simple Guide to Marketing ROI [Formula &amp; Ex...</div>
<svg class="r" style="left:1223.1px;top:722px" width="20" height="22" viewBox="0 0 20 22"><g fill="#106cd4"><path d="M7.1 6.1 H10.9 L15.9 2.8 V17 L10.9 13.2 H7.1 A3.55 3.55 0 0 1 7.1 6.1 Z" stroke="#106cd4" stroke-width="0.4" stroke-linejoin="round"/><rect x="7.8" y="12" width="2.3" height="6.7" rx="1.15"/></g><rect x="12.7" y="6.9" width="1.3" height="6.1" fill="#fff"/></svg>
<div class="t" style="left:1247.0px;top:717px;font-size:14px;color:#34363e;font-weight:400;letter-spacing:0.315px;">Seven important metrics to measure content m...</div>
<svg class="r" style="left:1223.1px;top:752.5px" width="20" height="22" viewBox="0 0 20 22"><g fill="#106cd4"><path d="M7.1 6.1 H10.9 L15.9 2.8 V17 L10.9 13.2 H7.1 A3.55 3.55 0 0 1 7.1 6.1 Z" stroke="#106cd4" stroke-width="0.4" stroke-linejoin="round"/><rect x="7.8" y="12" width="2.3" height="6.7" rx="1.15"/></g><rect x="12.7" y="6.9" width="1.3" height="6.1" fill="#fff"/></svg>
<div class="t" style="left:1247.0px;top:747.5px;font-size:14px;color:#34363e;font-weight:400;letter-spacing:0.194px;">Content Marketing ROI: How to Measure Your S...</div>
<div class="t" style="left:1350.0px;top:811px;font-size:14.7px;color:#006dca;font-weight:400;letter-spacing:0.45px;">Show more</div>
<svg class="r" style="left:1429.6px;top:822.3px" width="14" height="10" viewBox="0 0 14 10"><path d="M2.5 3 L6.5 7 L10.5 3" fill="none" stroke="#006dca" stroke-width="2" stroke-linecap="round" stroke-linejoin="round"/></svg>
<div class="r" style="left:1573px;top:259px;width:25.4px;height:25.4px;background:#ff4953;border-radius:50%;box-shadow:0 0 0 1px rgba(255,255,255,0.5)"></div>
<svg class="r" style="left:1572px;top:258px" width="28" height="28" viewBox="0 0 28 28"><g transform="translate(13.45 14) scale(0.87) translate(-13.3 -13.3)"><path d="M13.5 5.3 C10.6 7.6 10.2 10.3 11.8 12.6 C12.9 14.2 12.2 15.9 10.4 15.5 C9.3 15.2 8.6 13.9 8.4 11.9 C7.1 13.7 6.6 15.8 7 17.6 C7.6 20 9.8 21.3 12.9 21.3 C16.8 21.3 19.6 18.8 19.6 15.6 C19.6 12.2 16.3 10.7 14.7 8.7 C14 7.8 13.6 6.6 13.5 5.3 Z" fill="none" stroke="#fff" stroke-width="1.7" stroke-linejoin="round"/></g></svg>

</body></html>
